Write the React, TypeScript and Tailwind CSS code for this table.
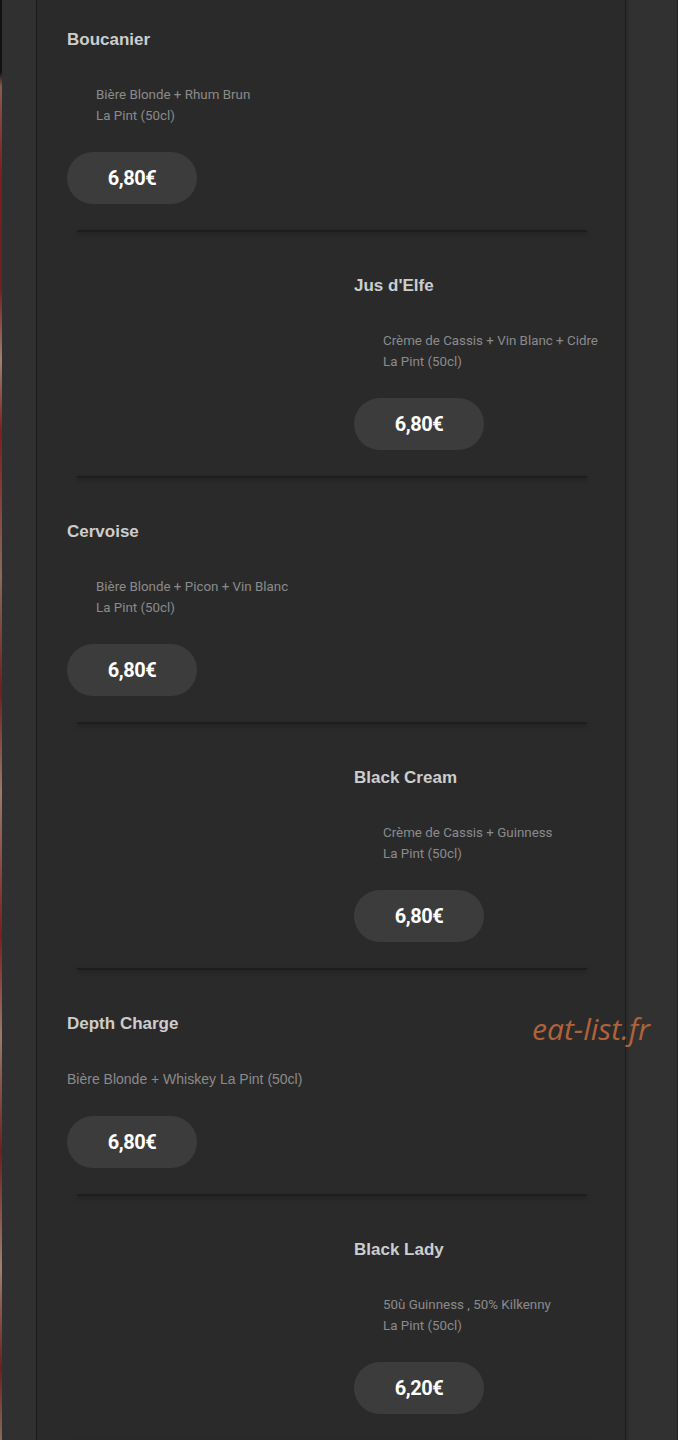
import React from "react";

type Item = { title: string; lines: string[]; price: string; right: boolean; single?: boolean };

const items: Item[] = [
  { title: "Boucanier", lines: ["Bière Blonde + Rhum Brun", "La Pint (50cl)"], price: "6,80€", right: false },
  { title: "Jus d'Elfe", lines: ["Crème de Cassis + Vin Blanc + Cidre", "La Pint (50cl)"], price: "6,80€", right: true },
  { title: "Cervoise", lines: ["Bière Blonde + Picon + Vin Blanc", "La Pint (50cl)"], price: "6,80€", right: false },
  { title: "Black Cream", lines: ["Crème de Cassis + Guinness", "La Pint (50cl)"], price: "6,80€", right: true },
  { title: "Depth Charge", lines: ["Bière Blonde + Whiskey La Pint (50cl)"], price: "6,80€", right: false, single: true },
  { title: "Black Lady", lines: ["50ù Guinness , 50% Kilkenny", "La Pint (50cl)"], price: "6,20€", right: true },
];

function Separator() {
  return (
    <div className="ml-[40px] mr-[38px] h-[2px] bg-[#1d1d1d] shadow-[0_2px_4px_rgba(0,0,0,0.35)]" />
  );
}

function MenuItem({ item, first }: { item: Item; first: boolean }) {
  return (
    <div className={`${first ? "pt-[30px]" : "pt-[44px]"} pb-[26px] ${item.right ? "pl-[317px]" : "pl-[30px]"}`}>
      <div className="font-['Liberation_Sans',Arial,sans-serif] text-[17px] leading-[20px] font-bold text-[#cdcdcd]">
        {item.title}
      </div>
      {item.single ? (
        <div className="mt-[35px] font-['Liberation_Sans',Arial,sans-serif] text-[14px] leading-[21px] text-[#8b8b8b]">
          {item.lines[0]}
        </div>
      ) : (
        <div className="mt-[34px] pl-[29px] font-['Roboto',sans-serif] text-[13.35px] leading-[21px] text-[#8b8b8b]">
          {item.lines.map((l, i) => (
            <div key={i}>{l}</div>
          ))}
        </div>
      )}
      <div className={`${item.single ? "mt-[26px]" : "mt-[26px]"} flex h-[52px] w-[130px] items-center justify-center rounded-full bg-[#3c3c3c]`}>
        <span className="font-['Roboto',sans-serif] text-[20px] font-bold tracking-[-0.5px] text-white">{item.price}</span>
      </div>
    </div>
  );
}

export default function App() {
  return (
    <div className="relative flex h-[1440px] w-[678px] overflow-hidden bg-[#303030]">
      <div className="flex w-[36px] shrink-0">
        <div className="w-[2px] bg-[linear-gradient(to_bottom,#111_0%,#111_5%,#8a5a50_6%,#7a1f1f_12%,#6e2020_20%,#a08070_25%,#7a1f1f_30%,#8a6a5a_40%,#6a2020_48%,#9a7a6a_55%,#7a1f1f_65%,#9a7a6a_72%,#6a2020_80%,#a08070_88%,#6a2020_95%,#8a6a5a_100%)]" />
        <div className="flex-1 bg-[#303030]" />
      </div>
      <div className="w-[590px] shrink-0 border-x border-[#1b1b1b] bg-[#2a2a2a]">
        {items.map((it, i) => (
          <React.Fragment key={i}>
            <MenuItem item={it} first={i === 0} />
            <Separator />
          </React.Fragment>
        ))}
      </div>
      <div className="w-[51px] shrink-0 border-l-[3px] border-[#2c2c2c] bg-[#313131]" />
      <div className="w-[1px] shrink-0 bg-[#1f1f1f]" />
      <div className="absolute left-[532px] top-[1011px] font-['Open_Sans',sans-serif] text-[30px] italic leading-[36px] text-[#b0623a]">
        eat-list.fr
      </div>
    </div>
  );
}
